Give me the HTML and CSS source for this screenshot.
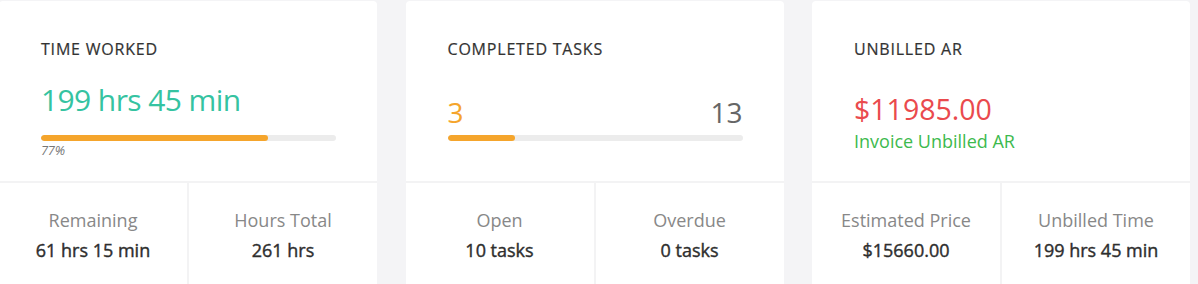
FILE: index.html
```html
<!DOCTYPE html>
<html lang="en">
<head>
<meta charset="utf-8">
<title>Project summary</title>
<link rel="stylesheet" href="styles.css">
</head>
<body>
<div class="cards">
  <section class="card">
    <div class="card-top">
      <h2 class="card-title">Time Worked</h2>
      <div class="big-value teal">199 hrs 45 min</div>
      <div class="bar"><div class="bar-fill" style="width:77%"></div></div>
      <div class="pct">77%</div>
    </div>
    <div class="card-bottom">
      <div class="cell"><div class="cell-label">Remaining</div><div class="cell-value">61 hrs 15 min</div></div>
      <div class="cell"><div class="cell-label">Hours Total</div><div class="cell-value">261 hrs</div></div>
    </div>
  </section>
  <section class="card">
    <div class="card-top">
      <h2 class="card-title">Completed Tasks</h2>
      <div class="count-row"><span class="orange">3</span><span class="muted">13</span></div>
      <div class="bar"><div class="bar-fill" style="width:23%"></div></div>
    </div>
    <div class="card-bottom">
      <div class="cell"><div class="cell-label">Open</div><div class="cell-value">10 tasks</div></div>
      <div class="cell"><div class="cell-label">Overdue</div><div class="cell-value">0 tasks</div></div>
    </div>
  </section>
  <section class="card">
    <div class="card-top">
      <h2 class="card-title">Unbilled AR</h2>
      <div class="money red">$11985.00</div>
      <a class="invoice-link" href="#">Invoice Unbilled AR</a>
    </div>
    <div class="card-bottom">
      <div class="cell"><div class="cell-label">Estimated Price</div><div class="cell-value">$15660.00</div></div>
      <div class="cell"><div class="cell-label">Unbilled Time</div><div class="cell-value">199 hrs 45 min</div></div>
    </div>
  </section>
</div>
</body>
</html>
```

FILE: styles.css
```css
* { box-sizing: border-box; }

html, body {
  margin: 0;
  padding: 0;
  background: #f4f4f6;
  font-family: "Open Sans", "Noto Sans", "Liberation Sans", sans-serif;
  color: #333;
  overflow: hidden;
}

.cards {
  display: grid;
  grid-template-columns: 378px 378px 378px;
  column-gap: 28.5px;
  margin-left: -1px;
  padding-top: 1px;
}

.card {
  display: flex;
  flex-direction: column;
  gap: 2px;
  background: #f3f3f4;
  border-radius: 4px;
}

.card-top {
  height: 180px;
  background: #fff;
  border-radius: 4px 4px 0 0;
  padding: 38px 41px 0 42px;
}

.card-title {
  margin: 0;
  font-size: 16px;
  line-height: 20px;
  font-weight: 400;
  letter-spacing: 0.8px;
  text-transform: uppercase;
  color: #333;
  -webkit-text-stroke: 0.2px #333;
}

.big-value {
  margin-top: 23px;
  font-size: 30px;
  line-height: 36px;
  letter-spacing: -0.6px;
}

.teal { color: #35c3a1; }
.orange { color: #f5a52c; }
.muted { color: #666; }
.red { color: #ea4a4d; }

.bar {
  margin-top: 17px;
  height: 6px;
  border-radius: 3px;
  background: #ececec;
  overflow: hidden;
}

.bar-fill {
  height: 100%;
  background: #f5a52c;
  border-radius: 3px;
}

.pct {
  margin-top: 1px;
  font-size: 13px;
  line-height: 17px;
  font-style: italic;
  letter-spacing: -0.3px;
  color: #777;
}

.count-row {
  margin-top: 36px;
  display: flex;
  justify-content: space-between;
  font-size: 28px;
  line-height: 34px;
}

.count-row + .bar { margin-top: 6px; }

.money {
  margin-top: 33px;
  font-size: 28.5px;
  line-height: 34px;
}

.invoice-link {
  display: block;
  margin-top: 3px;
  font-size: 18px;
  line-height: 24px;
  color: #3dba4e;
  text-decoration: none;
}

.card-bottom {
  display: grid;
  grid-template-columns: 1fr 1fr;
  gap: 2px;
  height: 110px;
}

.cell {
  background: #fff;
  text-align: center;
  padding-top: 25px;
}

.cell-label {
  font-size: 18px;
  line-height: 24px;
  color: #888;
}

.cell-value {
  margin-top: 6px;
  font-size: 18px;
  line-height: 24px;
  font-weight: 400;
  color: #2e2e2e;
  -webkit-text-stroke: 0.4px #2e2e2e;
}
```
